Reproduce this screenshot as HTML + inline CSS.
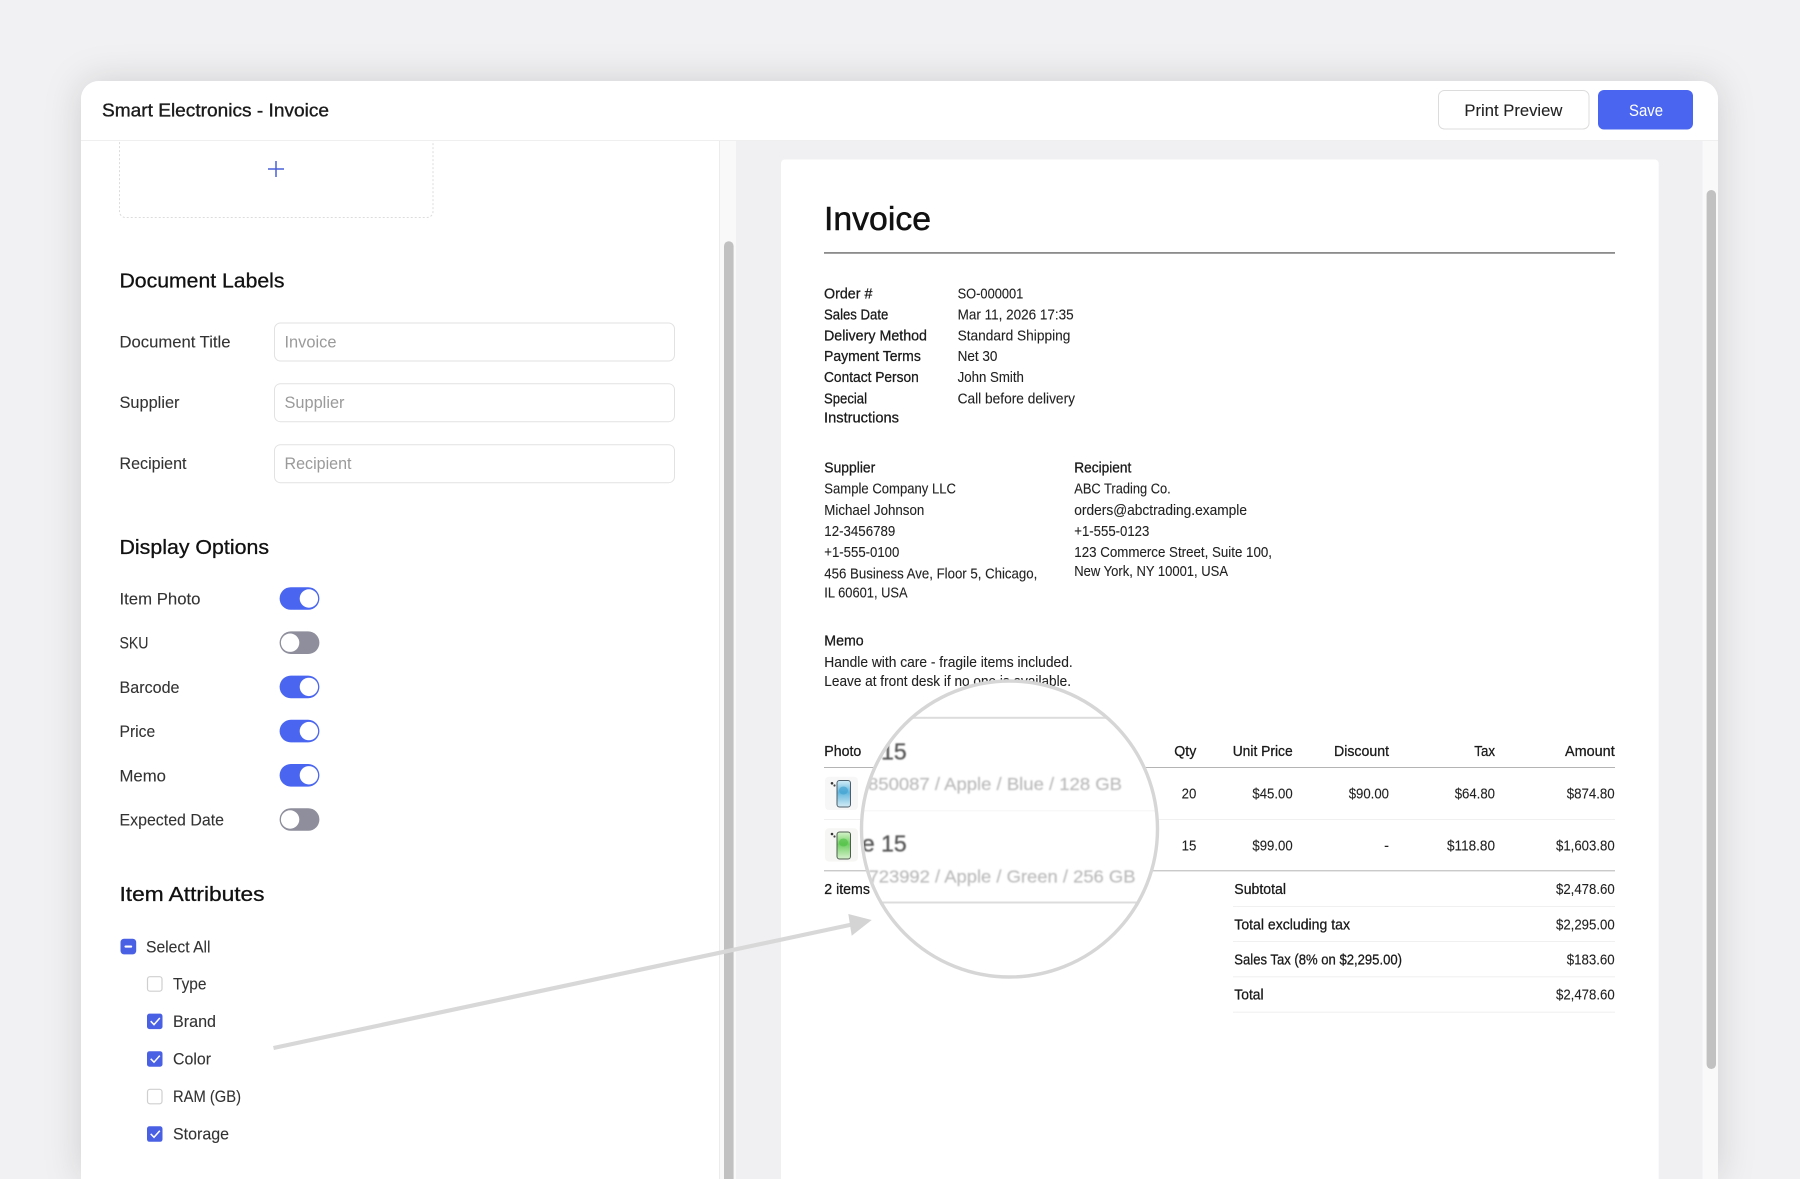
<!DOCTYPE html>
<html lang="en">
<head>
<meta charset="utf-8">
<title>Smart Electronics - Invoice</title>
<style>
html,body{margin:0;padding:0;width:1800px;height:1179px;overflow:hidden;background:#f1f1f3}
svg{display:block;position:absolute;left:0;top:0;overflow:hidden}
text{font-family:"Liberation Sans",sans-serif;white-space:pre}
.t{font-size:14.6px;fill:#222;stroke:#222;stroke-width:.1}
.m{font-size:14.6px;fill:#1a1a1a;stroke:#1a1a1a;stroke-width:.28}
.l{font-size:16.5px;fill:#333;stroke:#333;stroke-width:.1;transform:translateY(-.5px)}
.h{font-size:20.5px;fill:#111;stroke:#111;stroke-width:.3;transform:translateY(-.3px)}
.p{font-size:16.5px;fill:#9a9a9a;transform:translateY(-.5px)}
.e{text-anchor:end}
</style>
</head>
<body>
<svg width="1800" height="1179" viewBox="0 0 1800 1179" xmlns="http://www.w3.org/2000/svg">
<defs>
<filter id="sh" x="-10%" y="-15%" width="120%" height="130%"><feDropShadow dx="0" dy="0" stdDeviation="18" flood-color="#000" flood-opacity=".15"/></filter>
<filter id="bl" x="-5%" y="-5%" width="110%" height="110%"><feGaussianBlur stdDeviation=".7"/></filter>
<clipPath id="lens"><circle cx="1009.5" cy="829" r="148"/></clipPath>
<linearGradient id="gb" x1="0" y1="0" x2="0" y2="1"><stop offset="0" stop-color="#d4eef8"/><stop offset=".45" stop-color="#62b6dd"/><stop offset="1" stop-color="#d4ecf5"/></linearGradient>
<linearGradient id="gg" x1="0" y1="0" x2="0" y2="1"><stop offset="0" stop-color="#d8f3cc"/><stop offset=".45" stop-color="#70cf62"/><stop offset="1" stop-color="#d6f0cd"/></linearGradient>
</defs>

<rect width="1800" height="1179" fill="#f1f1f3"/>
<!-- window -->
<path d="M81 1179V99a18 18 0 0 1 18-18H1700a18 18 0 0 1 18 18V1179z" fill="#fff" filter="url(#sh)"/>

<!-- sidebar upload box -->
<rect x="119.5" y="100" width="313.5" height="117.5" rx="6" fill="#fff" stroke="#dcdcdc" stroke-dasharray="2 2"/>
<path d="M276 161v16M268 169h16" stroke="#4a60d8" stroke-width="1.5" fill="none"/>

<!-- sidebar scrollbar -->
<rect x="719" y="141" width="17" height="1038" fill="#f9f9f9"/>
<rect x="719" y="141" width="1" height="1038" fill="#ececec"/>
<path d="M724 1179V246a4.8 4.8 0 0 1 9.6 0V1179z" fill="#c1c1c1"/>

<!-- preview area -->
<rect x="736" y="141" width="966.5" height="1038" fill="#f0f0f2"/>
<rect x="1702.5" y="141" width="15.5" height="1038" fill="#f9f9f9"/>
<rect x="1706.6" y="190" width="9.4" height="879" rx="4.7" fill="#c1c1c1"/>
<path d="M781 1179V163.5a4 4 0 0 1 4-4H1654.7a4 4 0 0 1 4 4V1179z" fill="#fff"/>

<!-- header -->
<path d="M81 140V99a18 18 0 0 1 18-18H1700a18 18 0 0 1 18 18V140z" fill="#fff"/>
<rect x="81" y="140" width="1637" height="1" fill="#efeff0"/>
<text x="102" y="116.5" font-size="18.5" fill="#1a1a1a" stroke="#1a1a1a" stroke-width=".35" textLength="227" lengthAdjust="spacingAndGlyphs">Smart Electronics - Invoice</text>
<rect x="1438.5" y="90.5" width="150.5" height="38.5" rx="6" fill="#fff" stroke="#dcdcdc"/>
<text x="1464.4" y="116" font-size="16.5" fill="#222" stroke="#222" stroke-width=".1" textLength="98" lengthAdjust="spacingAndGlyphs">Print Preview</text>
<rect x="1598" y="90" width="95" height="39.5" rx="6" fill="#4a66f0"/>
<text x="1629" y="116" font-size="16.5" fill="#fff" textLength="34" lengthAdjust="spacingAndGlyphs">Save</text>

<!-- Document Labels -->
<text class="h" x="119.5" y="288" textLength="165" lengthAdjust="spacingAndGlyphs">Document Labels</text>
<text class="l" x="119.5" y="348" textLength="111" lengthAdjust="spacingAndGlyphs">Document Title</text>
<rect x="274.5" y="323" width="400" height="38" rx="6" fill="#fff" stroke="#e2e2e2"/>
<text class="p" x="284.5" y="348" textLength="52" lengthAdjust="spacingAndGlyphs">Invoice</text>
<text class="l" x="119.5" y="408.7" textLength="60" lengthAdjust="spacingAndGlyphs">Supplier</text>
<rect x="274.5" y="383.7" width="400" height="38" rx="6" fill="#fff" stroke="#e2e2e2"/>
<text class="p" x="284.5" y="408.7" textLength="60" lengthAdjust="spacingAndGlyphs">Supplier</text>
<text class="l" x="119.5" y="469.7" textLength="67" lengthAdjust="spacingAndGlyphs">Recipient</text>
<rect x="274.5" y="444.7" width="400" height="38" rx="6" fill="#fff" stroke="#e2e2e2"/>
<text class="p" x="284.5" y="469.7" textLength="67" lengthAdjust="spacingAndGlyphs">Recipient</text>

<!-- Display Options -->
<text class="h" x="119.5" y="554.5" textLength="149.5" lengthAdjust="spacingAndGlyphs">Display Options</text>
<text class="l" x="119.5" y="605" textLength="81" lengthAdjust="spacingAndGlyphs">Item Photo</text>
<text class="l" x="119.5" y="649.2" textLength="29" lengthAdjust="spacingAndGlyphs">SKU</text>
<text class="l" x="119.5" y="693.4" textLength="60" lengthAdjust="spacingAndGlyphs">Barcode</text>
<text class="l" x="119.5" y="737.6" textLength="35.7" lengthAdjust="spacingAndGlyphs">Price</text>
<text class="l" x="119.5" y="781.8" textLength="46.4" lengthAdjust="spacingAndGlyphs">Memo</text>
<text class="l" x="119.5" y="826" textLength="104.5" lengthAdjust="spacingAndGlyphs">Expected Date</text>

<g>
<rect x="279.6" y="587.2" width="39.8" height="22.6" rx="11.3" fill="#4a66f0"/><circle cx="308.9" cy="598.5" r="9.2" fill="#fff"/>
<rect x="279.6" y="631.4" width="39.8" height="22.6" rx="11.3" fill="#8e8e9c"/><circle cx="290.1" cy="642.7" r="9.2" fill="#fff"/>
<rect x="279.6" y="675.6" width="39.8" height="22.6" rx="11.3" fill="#4a66f0"/><circle cx="308.9" cy="686.9" r="9.2" fill="#fff"/>
<rect x="279.6" y="719.8" width="39.8" height="22.6" rx="11.3" fill="#4a66f0"/><circle cx="308.9" cy="731.1" r="9.2" fill="#fff"/>
<rect x="279.6" y="764" width="39.8" height="22.6" rx="11.3" fill="#4a66f0"/><circle cx="308.9" cy="775.3" r="9.2" fill="#fff"/>
<rect x="279.6" y="808.2" width="39.8" height="22.6" rx="11.3" fill="#8e8e9c"/><circle cx="290.1" cy="819.5" r="9.2" fill="#fff"/>
</g>

<!-- Item Attributes -->
<text class="h" x="119.5" y="901.5" textLength="145" lengthAdjust="spacingAndGlyphs">Item Attributes</text>
<rect x="120.5" y="938.7" width="15.7" height="15.7" rx="3.5" fill="#4a60e4"/>
<rect x="124.5" y="945.5" width="7.7" height="2.1" rx="1" fill="#fff"/>
<text class="l" x="146" y="952.8" textLength="64.5" lengthAdjust="spacingAndGlyphs">Select All</text>

<rect x="147.5" y="976.7" width="14.5" height="14.5" rx="2.5" fill="#fff" stroke="#cfcfcf" stroke-width="1.2"/>
<text class="l" x="173" y="989.8" textLength="33.5" lengthAdjust="spacingAndGlyphs">Type</text>

<rect x="147" y="1013.6" width="15.5" height="15.5" rx="2.5" fill="#4a60e4"/>
<path d="M150.7 1021.2l3.3 3.4 5.8-6.6" fill="none" stroke="#fff" stroke-width="1.5"/>
<text class="l" x="173" y="1027.4" textLength="43" lengthAdjust="spacingAndGlyphs">Brand</text>

<rect x="147" y="1051.2" width="15.5" height="15.5" rx="2.5" fill="#4a60e4"/>
<path d="M150.7 1058.8l3.3 3.4 5.8-6.6" fill="none" stroke="#fff" stroke-width="1.5"/>
<text class="l" x="173" y="1065" textLength="38" lengthAdjust="spacingAndGlyphs">Color</text>

<rect x="147.5" y="1089.3" width="14.5" height="14.5" rx="2.5" fill="#fff" stroke="#cfcfcf" stroke-width="1.2"/>
<text class="l" x="173" y="1102.4" textLength="68" lengthAdjust="spacingAndGlyphs">RAM (GB)</text>

<rect x="147" y="1126.3" width="15.5" height="15.5" rx="2.5" fill="#4a60e4"/>
<path d="M150.7 1133.9l3.3 3.4 5.8-6.6" fill="none" stroke="#fff" stroke-width="1.5"/>
<text class="l" x="173" y="1140" textLength="56" lengthAdjust="spacingAndGlyphs">Storage</text>

<!-- Invoice -->
<text x="824" y="230" font-size="33" fill="#111" stroke="#111" stroke-width=".5" textLength="107" lengthAdjust="spacingAndGlyphs">Invoice</text>
<rect x="824" y="252" width="791" height="1.8" fill="#8c8c8c"/>

<text class="m" x="824" y="298.3" textLength="48.4" lengthAdjust="spacingAndGlyphs">Order #</text>
<text class="t" x="957.6" y="298.3" textLength="65.7" lengthAdjust="spacingAndGlyphs">SO-000001</text>
<text class="m" x="824" y="319.4" textLength="64.3" lengthAdjust="spacingAndGlyphs">Sales Date</text>
<text class="t" x="957.6" y="319.4" textLength="116" lengthAdjust="spacingAndGlyphs">Mar 11, 2026 17:35</text>
<text class="m" x="824" y="340.3" textLength="103" lengthAdjust="spacingAndGlyphs">Delivery Method</text>
<text class="t" x="957.6" y="340.3" textLength="112.8" lengthAdjust="spacingAndGlyphs">Standard Shipping</text>
<text class="m" x="824" y="361" textLength="96.8" lengthAdjust="spacingAndGlyphs">Payment Terms</text>
<text class="t" x="957.6" y="361" textLength="39.8" lengthAdjust="spacingAndGlyphs">Net 30</text>
<text class="m" x="824" y="382" textLength="94.8" lengthAdjust="spacingAndGlyphs">Contact Person</text>
<text class="t" x="957.6" y="382" textLength="66.3" lengthAdjust="spacingAndGlyphs">John Smith</text>
<text class="m" x="824" y="403.7" textLength="43" lengthAdjust="spacingAndGlyphs">Special</text>
<text class="t" x="957.6" y="403.7" textLength="117.4" lengthAdjust="spacingAndGlyphs">Call before delivery</text>
<text class="m" x="824" y="422.7" textLength="75" lengthAdjust="spacingAndGlyphs">Instructions</text>

<text class="m" x="824.3" y="472.3" textLength="51" lengthAdjust="spacingAndGlyphs">Supplier</text>
<text class="t" x="824.3" y="493.3" textLength="131.7" lengthAdjust="spacingAndGlyphs">Sample Company LLC</text>
<text class="t" x="824.3" y="515" textLength="100" lengthAdjust="spacingAndGlyphs">Michael Johnson</text>
<text class="t" x="824.3" y="536" textLength="71" lengthAdjust="spacingAndGlyphs">12-3456789</text>
<text class="t" x="824.3" y="557" textLength="75" lengthAdjust="spacingAndGlyphs">+1-555-0100</text>
<text class="t" x="824.3" y="578.3" textLength="213" lengthAdjust="spacingAndGlyphs">456 Business Ave, Floor 5, Chicago,</text>
<text class="t" x="824.3" y="597.5" textLength="83.3" lengthAdjust="spacingAndGlyphs">IL 60601, USA</text>

<text class="m" x="1074.3" y="472.3" textLength="57" lengthAdjust="spacingAndGlyphs">Recipient</text>
<text class="t" x="1074.3" y="493.3" textLength="96.4" lengthAdjust="spacingAndGlyphs">ABC Trading Co.</text>
<text class="t" x="1074.3" y="515" textLength="172.7" lengthAdjust="spacingAndGlyphs">orders@abctrading.example</text>
<text class="t" x="1074.3" y="536" textLength="75" lengthAdjust="spacingAndGlyphs">+1-555-0123</text>
<text class="t" x="1074.3" y="557" textLength="197.7" lengthAdjust="spacingAndGlyphs">123 Commerce Street, Suite 100,</text>
<text class="t" x="1074.3" y="576" textLength="153.7" lengthAdjust="spacingAndGlyphs">New York, NY 10001, USA</text>

<text class="m" x="824.3" y="645.3" textLength="39.4" lengthAdjust="spacingAndGlyphs">Memo</text>
<text class="t" x="824.3" y="667" textLength="248.4" lengthAdjust="spacingAndGlyphs">Handle with care - fragile items included.</text>
<text class="t" x="824.3" y="686" textLength="246.7" lengthAdjust="spacingAndGlyphs">Leave at front desk if no one is available.</text>

<!-- table -->
<text class="m" x="824.3" y="756" textLength="37" lengthAdjust="spacingAndGlyphs">Photo</text>
<text class="m e" x="1196.3" y="756" textLength="22" lengthAdjust="spacingAndGlyphs">Qty</text>
<text class="m e" x="1292.7" y="756" textLength="60" lengthAdjust="spacingAndGlyphs">Unit Price</text>
<text class="m e" x="1389" y="756" textLength="55" lengthAdjust="spacingAndGlyphs">Discount</text>
<text class="m e" x="1495" y="756" textLength="20.7" lengthAdjust="spacingAndGlyphs">Tax</text>
<text class="m e" x="1614.7" y="756" textLength="49.7" lengthAdjust="spacingAndGlyphs">Amount</text>
<rect x="824" y="767" width="791" height="1" fill="#b4b4b4"/>
<rect x="824" y="819" width="791" height="1" fill="#f0f0f0"/>
<rect x="824" y="870.3" width="791" height="1" fill="#b4b4b4"/>

<rect x="825" y="776.7" width="33" height="33.3" rx="4" fill="#f7f7f8"/>
<rect x="825" y="828.3" width="33" height="33.3" rx="4" fill="#f6f7f4"/>
<circle cx="832" cy="783.3" r="1.3" fill="#333"/><circle cx="834.5" cy="785.5" r="1.1" fill="#444"/>
<rect x="837" y="780.5" width="13.5" height="26.5" rx="2.5" fill="url(#gb)" stroke="#4e5e6a" stroke-width="1"/>
<ellipse cx="843.5" cy="790.5" rx="4.5" ry="4" fill="#3f9fcf" opacity=".65"/>
<circle cx="832" cy="834" r="1.3" fill="#333"/><circle cx="834.5" cy="836.5" r="1.1" fill="#444"/>
<rect x="837" y="832" width="13.5" height="27" rx="2.5" fill="url(#gg)" stroke="#4e5e4e" stroke-width="1"/>
<ellipse cx="843.5" cy="842.5" rx="4.5" ry="4" fill="#4fbf44" opacity=".65"/>

<text class="t e" x="1196.3" y="798.7" textLength="14.7" lengthAdjust="spacingAndGlyphs">20</text>
<text class="t e" x="1292.7" y="798.7" textLength="40.3" lengthAdjust="spacingAndGlyphs">$45.00</text>
<text class="t e" x="1389" y="798.7" textLength="40.3" lengthAdjust="spacingAndGlyphs">$90.00</text>
<text class="t e" x="1495" y="798.7" textLength="40.3" lengthAdjust="spacingAndGlyphs">$64.80</text>
<text class="t e" x="1614.7" y="798.7" textLength="48" lengthAdjust="spacingAndGlyphs">$874.80</text>
<text class="t e" x="1196.3" y="850.3" textLength="14.7" lengthAdjust="spacingAndGlyphs">15</text>
<text class="t e" x="1292.7" y="850.3" textLength="40.3" lengthAdjust="spacingAndGlyphs">$99.00</text>
<text class="t e" x="1389" y="850.3">-</text>
<text class="t e" x="1495" y="850.3" textLength="48" lengthAdjust="spacingAndGlyphs">$118.80</text>
<text class="t e" x="1614.7" y="850.3" textLength="58.7" lengthAdjust="spacingAndGlyphs">$1,603.80</text>

<text class="m" x="824.3" y="894" textLength="45.6" lengthAdjust="spacingAndGlyphs">2 items</text>

<text class="m" x="1234.3" y="894" textLength="51.7" lengthAdjust="spacingAndGlyphs">Subtotal</text>
<text class="t e" x="1614.7" y="894" textLength="58.7" lengthAdjust="spacingAndGlyphs">$2,478.60</text>
<rect x="1233" y="906" width="382" height="1" fill="#f0f0f0"/>
<text class="m" x="1234.3" y="929.3" textLength="115.7" lengthAdjust="spacingAndGlyphs">Total excluding tax</text>
<text class="t e" x="1614.7" y="929.3" textLength="58.7" lengthAdjust="spacingAndGlyphs">$2,295.00</text>
<rect x="1233" y="941" width="382" height="1" fill="#f0f0f0"/>
<text class="m" x="1234.3" y="964.3" textLength="167.7" lengthAdjust="spacingAndGlyphs">Sales Tax (8% on $2,295.00)</text>
<text class="t e" x="1614.7" y="964.3" textLength="48" lengthAdjust="spacingAndGlyphs">$183.60</text>
<rect x="1233" y="976.3" width="382" height="1" fill="#f0f0f0"/>
<text class="m" x="1234.3" y="999.3" textLength="29.3" lengthAdjust="spacingAndGlyphs">Total</text>
<text class="t e" x="1614.7" y="999.3" textLength="58.7" lengthAdjust="spacingAndGlyphs">$2,478.60</text>
<rect x="1233" y="1011.7" width="382" height="1" fill="#f0f0f0"/>

<!-- arrow -->
<path d="M273.5 1048L852 924.5" stroke="#d8d8d8" stroke-width="4.2" fill="none"/>
<path d="M848.3 914L871.7 920L851.7 935.7z" fill="#d4d4d4"/>

<!-- magnifier lens -->
<circle cx="1009.5" cy="829" r="149" fill="#fff"/>
<g clip-path="url(#lens)">
<rect x="850" y="716.8" width="320" height="2" fill="#dcdcdc"/>
<rect x="850" y="810.3" width="320" height="1" fill="#f6f6f6"/>
<rect x="850" y="901.5" width="320" height="2" fill="#dcdcdc"/>
<g filter="url(#bl)">
<text x="906.7" y="759.3" font-size="23" fill="#555" text-anchor="end" stroke="#555" stroke-width=".3">iPhone 15</text>
<text x="906.7" y="851.7" font-size="23" fill="#555" text-anchor="end" stroke="#555" stroke-width=".3">iPhone 15</text>
<text x="868" y="790" font-size="17.5" fill="#bcbcbc" stroke="#bcbcbc" stroke-width=".2" textLength="254" lengthAdjust="spacingAndGlyphs">850087 / Apple / Blue / 128 GB</text>
<text x="868.5" y="882.7" font-size="17.5" fill="#bcbcbc" stroke="#bcbcbc" stroke-width=".2" textLength="267" lengthAdjust="spacingAndGlyphs">723992 / Apple / Green / 256 GB</text>
</g>
</g>
<circle cx="1009.5" cy="829" r="148" fill="none" stroke="#d6d6d6" stroke-width="3.4"/>
</svg>
</body>
</html>
